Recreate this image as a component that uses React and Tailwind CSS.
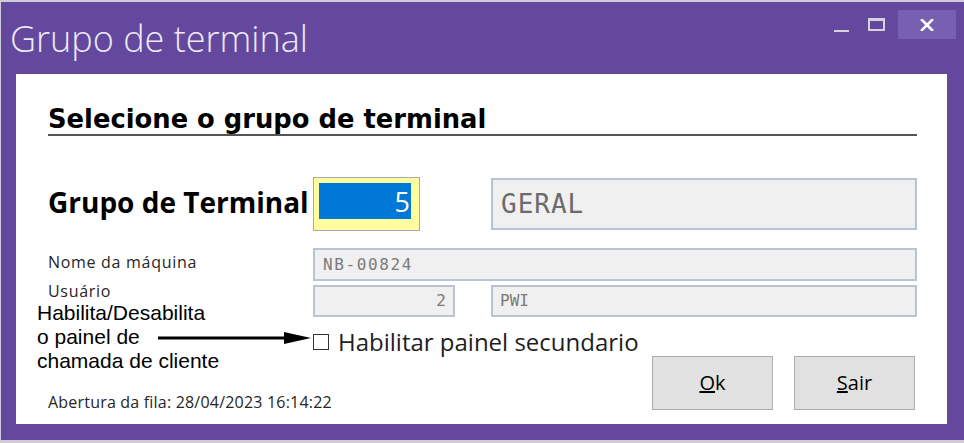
const ui = { fontFamily: '"Open Sans", "Noto Sans", sans-serif' }
const mono = { fontFamily: '"DejaVu Sans Mono", "Liberation Mono", monospace' }
const arial = { fontFamily: '"Liberation Sans", Arial, sans-serif' }
const heavy = { fontFamily: '"DejaVu Sans", Verdana, sans-serif' }

const Field = ({ className, children, textClass }) => (
  <div className={`flex items-center bg-[#f0f0f0] border-2 border-[#b9c3d1] ${className}`}>
    <span className={textClass} style={mono}>{children}</span>
  </div>
)

const App = () => {
  return (
    <div className="relative w-[964px] h-[443px] bg-[#64489e] border-t-2 border-b-[3px] border-l border-[#cfcbd8] flex flex-col overflow-hidden" style={ui}>
      {/* title bar */}
      <div className="h-[72px] flex items-start shrink-0">
        <h1 className="pl-[9px] pt-[13px] text-[36px] leading-[48px] font-light text-[#eeeaf6]">Grupo de terminal</h1>
        <div className="ml-auto mr-[8px] mt-[8px] flex items-center">
          <div className="w-[17px] h-[29px] flex items-end pb-[7px]">
            <div className="w-[15px] h-[2px] bg-[#d6d2de]" />
          </div>
          <div className="ml-[17px] w-[17px] h-[29px] flex items-center">
            <div className="w-[17px] h-[13px] border-2 border-t-[3px] border-[#d6d2de]" />
          </div>
          <div className="ml-[13px] w-[58px] h-[29px] bg-[#7760b2] flex items-center justify-center">
            <svg width="14" height="12" viewBox="0 0 14 12">
              <path d="M2 1 L12 11 M12 1 L2 11" stroke="#ffffff" strokeWidth="2.6" strokeLinecap="square" />
            </svg>
          </div>
        </div>
      </div>

      {/* dialog body */}
      <div className="relative ml-[15px] mr-[17px] h-[350px] bg-white pl-[32px] pr-[30px] pt-[31px] flex flex-col">
        <div className="border-b-2 border-[#555] pb-[1px]">
          <h2 className="text-[25.8px] leading-[28px] font-bold text-black" style={heavy}>Selecione o grupo de terminal</h2>
        </div>

        <div className="mt-[41px] flex items-center">
          <div className="w-[265px] text-[28px] font-bold text-black leading-none -mt-[4px]">Grupo de Terminal</div>
          <div className="w-[107px] h-[54px] border border-[#a9a9a9] bg-[#fefea0] pl-[5px] pr-[8px] pt-[5px] pb-[11px]">
            <div className="h-full bg-[#0078d7] flex items-center justify-end pr-[1px]">
              <span className="text-white text-[27px] leading-none">5</span>
            </div>
          </div>
          <Field className="ml-[71px] flex-1 h-[52px] pl-[8px]" textClass="text-[26px] text-[#6b6b6b] tracking-[1px]">GERAL</Field>
        </div>

        <div className="mt-[17px] flex items-center">
          <div className="w-[265px] text-[16px] tracking-[0.7px] text-[#262626] -mt-[6px]">Nome da máquina</div>
          <Field className="flex-1 h-[33px] pl-[8px]" textClass="text-[16px] tracking-[1.6px] text-[#7a7a7a]">NB-00824</Field>
        </div>

        <div className="mt-[4px] flex items-center">
          <div className="w-[265px] text-[16px] tracking-[0.7px] text-[#262626] -mt-[20px]">Usuário</div>
          <Field className="w-[142px] h-[32px] justify-end pr-[7px]" textClass="text-[16px] text-[#7a7a7a]">2</Field>
          <Field className="ml-[36px] flex-1 h-[32px] pl-[7px]" textClass="text-[16px] text-[#7a7a7a]">PWI</Field>
        </div>

        <div className="mt-[12px] flex items-center pl-[265px]">
          <div className="w-[16px] h-[16px] border border-[#333] bg-white" />
          <span className="ml-[9px] text-[24px] leading-[26px] text-[#1e1e1e]">Habilitar painel secundario</span>
        </div>

        <div className="mt-auto mb-[14px] flex items-end">
          <div className="text-[16px] tracking-[0.2px] text-[#262626] leading-[20px] mb-[-2px]">Abertura da fila: 28/04/2023 16:14:22</div>
          <div className="ml-auto mr-[2px] flex gap-[21px]">
            <button className="w-[121px] h-[54px] bg-[#e1e1e1] border border-[#adadad] text-[20px] text-black"><span className="underline">O</span>k</button>
            <button className="w-[121px] h-[54px] bg-[#e1e1e1] border border-[#adadad] text-[20px] text-black"><span className="underline">S</span>air</button>
          </div>
        </div>

        {/* annotation pasted over the dialog */}
        <div className="absolute left-[21px] top-[227px] text-[21px] leading-[24px] text-black" style={arial}>
          <p>Habilita/Desabilita</p>
          <p>o painel de</p>
          <p>chamada de cliente</p>
        </div>
        <svg className="absolute left-[142px] top-[257px]" width="155" height="14" viewBox="0 0 155 14">
          <line x1="0" y1="7" x2="128" y2="7" stroke="#000" strokeWidth="3" />
          <polygon points="126,1 153,7 126,13" fill="#000" />
        </svg>
      </div>
    </div>
  )
}

export default App
